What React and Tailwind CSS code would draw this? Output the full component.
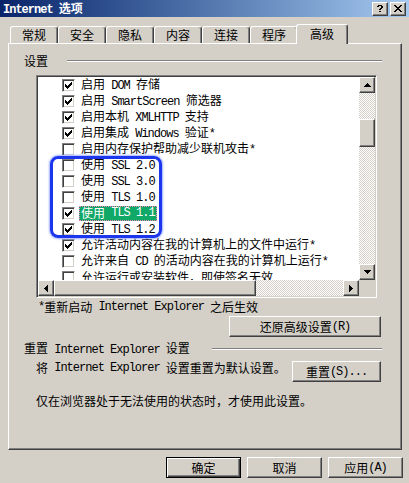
import React from "react";

function T({ s }) {
  const parts = s.split(/([\x20-\x7e]+)/);
  return parts.map((p, i) =>
    p === "" ? null : /^[\x20-\x7e]+$/.test(p) ? (
      <span key={i} className="font-['Liberation_Mono',monospace] text-[12px] tracking-[-1px] whitespace-pre">
        {p}
      </span>
    ) : (
      <span key={i}>{p}</span>
    )
  );
}

function Px({ rows, className = "" }) {
  const h = rows.length;
  const w = rows[0].length;
  return (
    <svg width={w} height={h} viewBox={`0 0 ${w} ${h}`} shapeRendering="crispEdges" className={className}>
      {rows.flatMap((r, y) =>
        [...r].map((c, x) =>
          c === "x" ? <rect key={`${x}-${y}`} x={x} y={y} width="1" height="1" fill="currentColor" /> : null
        )
      )}
    </svg>
  );
}

const CHECK = ["......x", ".....xx", "x...xxx", "xx.xxx.", "xxxxx..", ".xxx...", "..x...."];
const UP = ["...x...", "..xxx..", ".xxxxx.", "xxxxxxx"];
const DOWN = ["xxxxxxx", ".xxxxx.", "..xxx..", "...x..."];
const LEFT = ["...x", "..xx", ".xxx", "xxxx", ".xxx", "..xx", "...x"];
const RIGHT = ["x...", "xx..", "xxx.", "xxxx", "xxx.", "xx..", "x..."];
const CLOSE = ["xx....xx", ".xx..xx.", "..xxxx..", "...xx...", "..xxxx..", ".xx..xx.", "xx....xx"];
const QUESTION = [".xxxx.", "xx..xx", "....xx", "...xx.", "..xx..", "......", "..xx.."];

const raised =
  "bg-[#d4d0c8] border border-t-white border-l-white border-r-[#404040] border-b-[#404040] shadow-[inset_-1px_-1px_#808080]";

function Check({ checked }) {
  return (
    <span className="w-[13px] h-[13px] shrink-0 bg-white border border-t-[#808080] border-l-[#808080] border-r-white border-b-white shadow-[inset_1px_1px_#404040,inset_-1px_-1px_#d4d0c8] flex items-center justify-center">
      {checked && <Px rows={CHECK} className="text-black" />}
    </span>
  );
}

function Btn({ children, className = "" }) {
  return <div className={`${raised} flex items-center justify-center ${className}`}>{children}</div>;
}

const items = [
  ["启用 DOM 存储", true],
  ["启用 SmartScreen 筛选器", true],
  ["启用本机 XMLHTTP 支持", true],
  ["启用集成 Windows 验证*", true],
  ["启用内存保护帮助减少联机攻击*", false],
  ["使用 SSL 2.0", false],
  ["使用 SSL 3.0", false],
  ["使用 TLS 1.0", false],
  ["使用 TLS 1.1", true, true],
  ["使用 TLS 1.2", true],
  ["允许活动内容在我的计算机上的文件中运行*", true],
  ["允许来自 CD 的活动内容在我的计算机上运行*", false],
  ["允许运行或安装软件，即使签名无效", false],
];

const tabs = ["常规", "安全", "隐私", "内容", "连接", "程序"];

export default function App() {
  const track =
    "bg-[image:repeating-conic-gradient(#ffffff_0%_25%,#d4d0c8_0%_50%)] bg-[length:2px_2px]";
  return (
    <div className="relative w-[409px] h-[483px] bg-[#d4d0c8] overflow-hidden font-['Noto_Sans_CJK_SC',sans-serif] text-[12px] leading-none text-black">
      {/* Title bar */}
      <div className="h-[17px] flex items-center bg-linear-to-r from-[#0a246a] to-[#a6caf0] pl-[3px] pr-[3px]">
        <span className="text-white font-bold">
          <T s="Internet 选项" />
        </span>
        <div className="ml-auto flex gap-[2px]">
          <Btn className="w-[16px] h-[14px]">
            <Px rows={QUESTION} className="text-black" />
          </Btn>
          <Btn className="w-[16px] h-[14px]">
            <Px rows={CLOSE} className="text-black" />
          </Btn>
        </div>
      </div>

      {/* Tabs */}
      <div className="mt-[7px] h-[19px] flex items-end pl-[10px]">
        {tabs.map((t) => (
          <div
            key={t}
            className="w-[48px] h-[17px] border-t border-l border-r border-t-white border-l-white border-r-[#404040] shadow-[inset_-1px_0_#808080] rounded-t-[3px] flex items-center justify-center"
          >
            {t}
          </div>
        ))}
        <div className="relative z-10 -ml-[2px] mb-[-1px] w-[52px] h-[20px] bg-[#d4d0c8] border-t border-l border-r border-t-white border-l-white border-r-[#404040] shadow-[inset_-1px_0_#808080] rounded-t-[3px] flex items-center justify-center pb-[2px]">
          高级
        </div>
      </div>

      {/* Panel */}
      <div className="ml-[8px] w-[394px] h-[407px] border border-t-white border-l-white border-r-[#404040] border-b-[#404040] shadow-[inset_-1px_-1px_#808080] flex flex-col">
        <div className="mt-[10px] h-[14px] flex items-center pl-[15px]">
          <span className="w-[43px]">设置</span>
          <div className="w-[315px] h-[2px] border-t border-t-[#808080] border-b border-b-white" />
        </div>

        {/* List box */}
        <div className="mt-[7px] ml-[27px] w-[341px] h-[223px] p-[1px] border border-t-[#808080] border-l-[#808080] border-r-white border-b-white shadow-[inset_1px_1px_#404040,inset_-1px_-1px_#d4d0c8]">
          <div className="grid grid-cols-[321px_16px] grid-rows-[203px_16px] w-[337px] h-[219px]">
            <div className="bg-white overflow-hidden whitespace-nowrap">
              {items.map(([label, checked, sel]) => (
                <div key={label} className="h-[16px] flex items-center pl-[24px]">
                  <Check checked={checked} />
                  {sel ? (
                    <span className="ml-[4px] h-[15px] flex items-center px-[1px] bg-[#0fa866] text-white border border-dotted border-[#ff7fbf]">
                      <T s={label} />
                    </span>
                  ) : (
                    <span className="ml-[6px]">
                      <T s={label} />
                    </span>
                  )}
                </div>
              ))}
            </div>
            {/* vertical scrollbar */}
            <div className={`flex flex-col ${track}`}>
              <Btn className="w-[16px] h-[16px] shrink-0">
                <Px rows={UP} />
              </Btn>
              <div className="flex-1 flex flex-col">
                <div className={`${raised} mt-[26px] h-[28px] w-[16px]`} />
              </div>
              <Btn className="w-[16px] h-[16px] shrink-0">
                <Px rows={DOWN} />
              </Btn>
            </div>
            {/* horizontal scrollbar */}
            <div className={`flex ${track}`}>
              <Btn className="w-[16px] h-[16px] shrink-0">
                <Px rows={LEFT} />
              </Btn>
              <div className={`${raised} w-[202px] h-[16px] shrink-0`} />
              <div className="flex-1" />
              <Btn className="w-[16px] h-[16px] shrink-0">
                <Px rows={RIGHT} />
              </Btn>
            </div>
            <div className="bg-[#d4d0c8]" />
          </div>
        </div>

        <div className="mt-[2px] h-[14px] ml-[29px] flex items-center whitespace-nowrap">
          <T s="*重新启动 Internet Explorer 之后生效" />
        </div>

        <div className="mt-[2px] flex justify-end pr-[20px]">
          <Btn className="w-[152px] h-[21px]">
            <T s="还原高级设置(R)" />
          </Btn>
        </div>

        <div className="mt-[5px] h-[14px] flex items-center pl-[15px] whitespace-nowrap">
          <span className="w-[188px]">
            <T s="重置 Internet Explorer 设置" />
          </span>
          <div className="w-[170px] h-[2px] border-t border-t-[#808080] border-b border-b-white" />
        </div>

        <div className="mt-[5px] flex items-start">
          <span className="ml-[27px] h-[14px] flex items-center whitespace-nowrap">
            <T s="将 Internet Explorer 设置重置为默认设置。" />
          </span>
          <Btn className="ml-auto mr-[20px] w-[89px] h-[21px]">
            <T s="重置(S)..." />
          </Btn>
        </div>

        <div className="mt-[12px] ml-[27px] h-[14px] flex items-center whitespace-nowrap">
          仅在浏览器处于无法使用的状态时，才使用此设置。
        </div>
      </div>

      {/* Bottom buttons */}
      <div className="mt-[7px] flex justify-end pr-[6px] gap-[6px]">
        <div className="w-[75px] h-[21px] bg-[#d4d0c8] border border-black shadow-[inset_1px_1px_#ffffff,inset_-1px_-1px_#404040,inset_-2px_-2px_#808080] flex items-center justify-center">
          确定
        </div>
        <Btn className="w-[75px] h-[21px]">取消</Btn>
        <Btn className="w-[75px] h-[21px]">
          <T s="应用(A)" />
        </Btn>
      </div>

      {/* Annotation highlight */}
      <div className="absolute left-[50px] top-[156px] w-[112px] h-[82px] border-[3px] border-[#1c36ee] rounded-[8px] shadow-[0_0_2px_1px_#9fb0ff]" />
    </div>
  );
}
